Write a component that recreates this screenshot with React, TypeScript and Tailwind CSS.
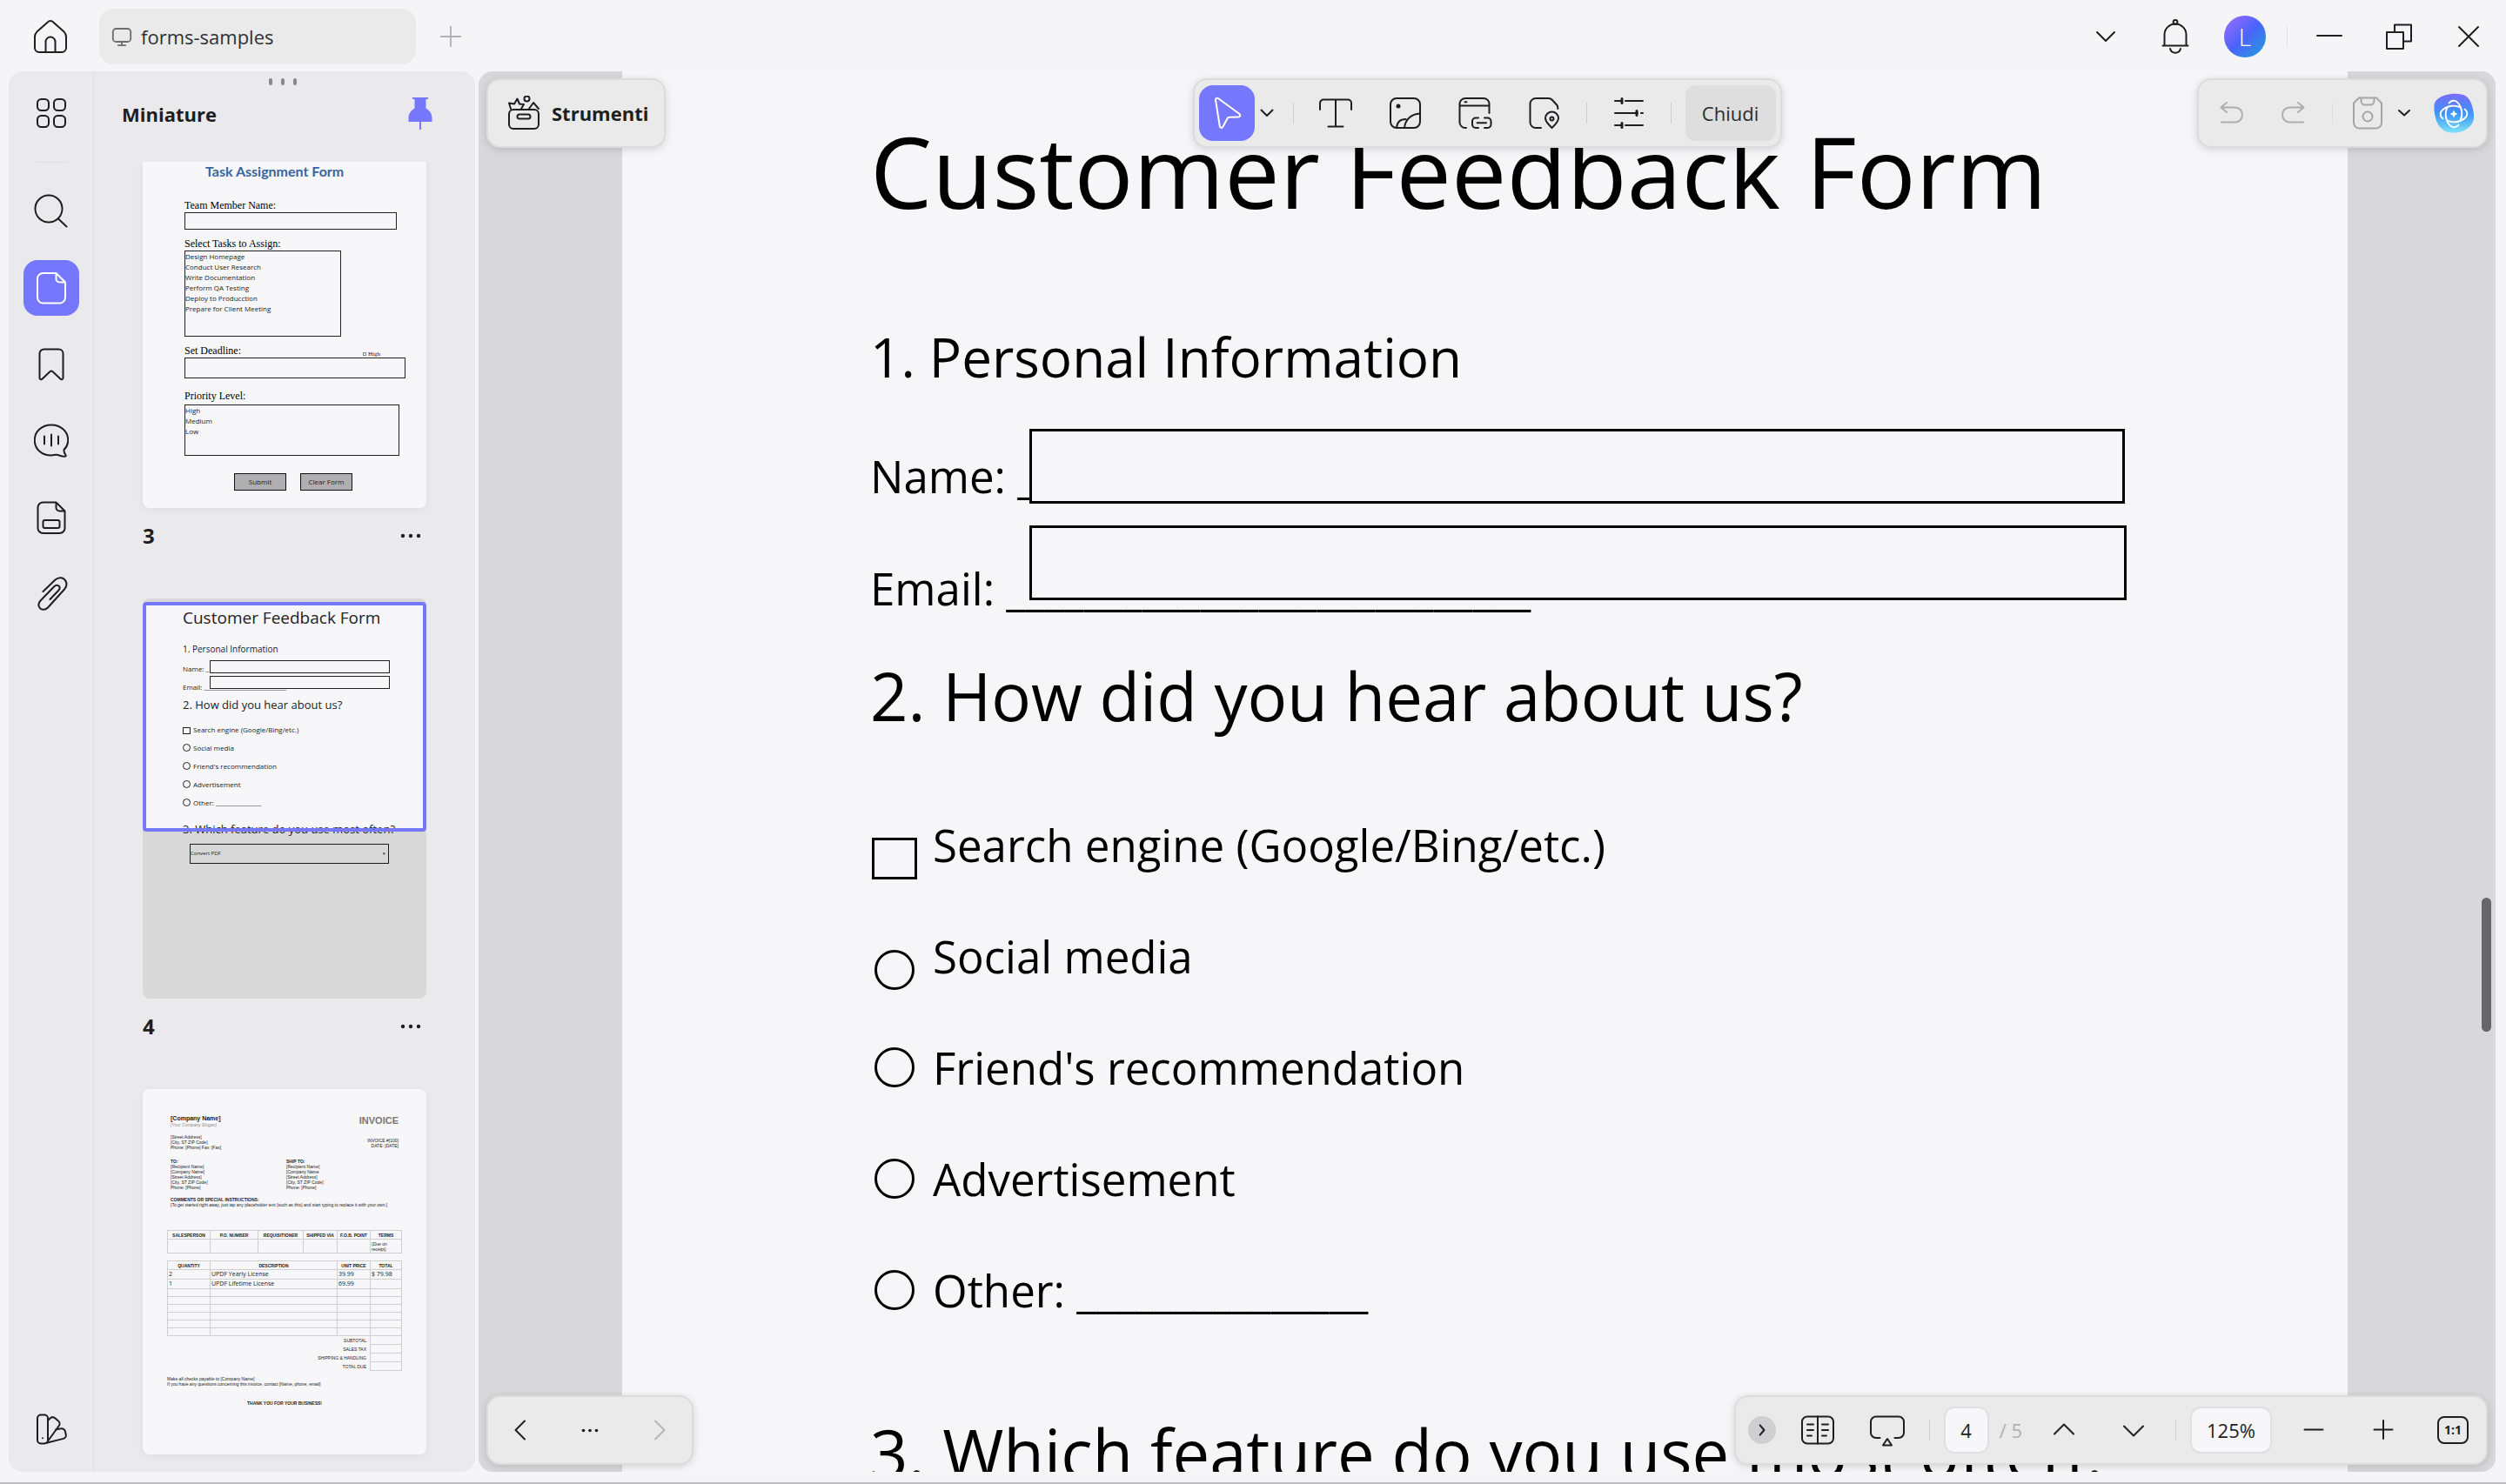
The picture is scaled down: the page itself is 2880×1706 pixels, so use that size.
import type { ReactNode } from "react";

interface IconProps {
  children: ReactNode;
  className?: string;
  stroke?: number;
}

function Icon({ children, className = "size-10", stroke = 2 }: IconProps) {
  return (
    <svg
      viewBox="0 0 40 40"
      fill="none"
      stroke="currentColor"
      strokeWidth={stroke}
      strokeLinecap="round"
      strokeLinejoin="round"
      className={`shrink-0 ${className}`}
      aria-hidden="true"
    >
      {children}
    </svg>
  );
}

interface ToolButtonProps {
  label: string;
  children: ReactNode;
  className?: string;
}

function ToolButton({ label, children, className = "w-16" }: ToolButtonProps) {
  return (
    <button
      type="button"
      aria-label={label}
      className={`flex h-16 shrink-0 items-center justify-center rounded-2xl ${className}`}
    >
      {children}
    </button>
  );
}

function Separator({ className = "bg-[#cfcfd0]" }: { className?: string }) {
  return <div className={`h-6 w-px shrink-0 ${className}`} />;
}

const barClass =
  "pointer-events-auto flex h-20 items-center rounded-2xl border-2 border-[#dcdcdd] bg-[#eaeaeb] shadow-[0_2px_10px_rgba(0,0,0,0.14)]";

function Dots({ className = "w-6" }: { className?: string }) {
  return (
    <svg viewBox="0 0 24 6" fill="currentColor" className={className} aria-hidden="true">
      <circle cx="3" cy="3" r="2.2" />
      <circle cx="12" cy="3" r="2.2" />
      <circle cx="21" cy="3" r="2.2" />
    </svg>
  );
}

function TitleBar() {
  return (
    <header className="flex h-[82px] shrink-0 items-center justify-between pt-[2px] pr-[11px] pl-[26px]">
      <div className="flex items-center">
        <ToolButton label="Home">
          <Icon>
            <path d="M16.8 3.4a4.4 4.4 0 0 1 6.4 0L35.6 14.6A8 8 0 0 1 38 20v13a5 5 0 0 1-5 5H7a5 5 0 0 1-5-5V20a8 8 0 0 1 2.4-5.4z" />
            <path d="M14.5 38V26a5.5 5.5 0 0 1 11 0v12" />
          </Icon>
        </ToolButton>
        <div className="ml-6 flex h-16 w-[364px] items-center gap-[10px] rounded-2xl bg-[#eaeaeb] px-[14px] text-[22px] text-[#303032]">
          <Icon className="size-6 text-[#6d6d70]" stroke={3}>
            <rect x="3" y="5" width="34" height="25" rx="6" />
            <path d="M20 30v6M13 37h14" />
          </Icon>
          forms-samples
        </div>
        <ToolButton label="New tab" className="ml-2 w-16">
          <Icon className="size-6 text-[#b0b0b2]" stroke={3}>
            <path d="M20 1v38M1 20h38" />
          </Icon>
        </ToolButton>
      </div>
      <div className="flex items-center gap-4">
        <ToolButton label="More tabs">
          <Icon>
            <path d="M10 15l10 10 10-10" />
          </Icon>
        </ToolButton>
        <ToolButton label="Notifications">
          <Icon>
            <circle cx="20" cy="3.5" r="2.4" />
            <path d="M7.5 30V18a12.5 12.5 0 0 1 25 0v12M5.5 30.5h29M14 34a6.2 6.2 0 0 0 12 0" />
          </Icon>
        </ToolButton>
        <ToolButton label="Account">
          <span className="flex size-12 items-center justify-center rounded-full bg-linear-to-br from-[#9a6bfa] via-[#4a63fb] to-[#0a9bd8] text-[28px] font-light text-white">
            L
          </span>
        </ToolButton>
        <Separator className="bg-[#e3e3e5]" />
        <ToolButton label="Minimize">
          <Icon>
            <path d="M6 19h28" />
          </Icon>
        </ToolButton>
        <ToolButton label="Restore">
          <Icon>
            <path d="M6 15h19v19H6zM15 15V6.5h19v19h-9" />
          </Icon>
        </ToolButton>
        <ToolButton label="Close">
          <Icon>
            <path d="M9 9l22 22M31 9L9 31" />
          </Icon>
        </ToolButton>
      </div>
    </header>
  );
}

function Rail() {
  return (
    <nav className="flex w-[98px] shrink-0 flex-col items-center gap-6 border-r border-[#dfdfe1] pt-4 pb-[17px]">
      <ToolButton label="Apps">
        <Icon>
          <rect x="4" y="4" width="13" height="13" rx="4.5" />
          <rect x="23" y="4" width="13" height="13" rx="4.5" />
          <rect x="4" y="23" width="13" height="13" rx="4.5" />
          <rect x="23" y="23" width="13" height="13" rx="4.5" />
        </Icon>
      </ToolButton>
      <div className="h-px w-9 bg-[#dddddf]" />
      <ToolButton label="Search">
        <Icon>
          <circle cx="17" cy="17" r="15.5" />
          <path d="M28 28.5l9.5 9" />
        </Icon>
      </ToolButton>
      <ToolButton label="Thumbnails" className="w-16 bg-[#7578fd] text-white">
        <Icon>
          <path d="M10 3h15.5L36 13.5V31a6.500 6.500 0 0 1-6.500 6.500h-19A6.500 6.500 0 0 1 4 31V9.500A6.500 6.500 0 0 1 10.500 3M25.500 3v6.500a4 4 0 0 0 4 4H36" />
        </Icon>
      </ToolButton>
      <ToolButton label="Bookmarks">
        <Icon>
          <path d="M6.500 7.500a5 5 0 0 1 5-5h17a5 5 0 0 1 5 5v28c0 1.600-1.700 2.300-2.900 1.200l-8.700-8.200a2.700 2.700 0 0 0-3.800 0l-8.700 8.200c-1.200 1.100-2.900.4-2.900-1.200z" />
        </Icon>
      </ToolButton>
      <ToolButton label="Comments">
        <Icon>
          <path d="M29 36.500c-3-1.500-5-.3-9 0C8.500 36.500.8 29 .8 19S9 1.500 20 1.500 39.200 9 39.200 19c0 4.500-1.500 8-4.700 11-.3 2 .8 4.500 2.300 7-.6 1.300-4.600.6-7.800-.5z" />
          <path d="M12 14.500v9M20 12.500v13M28 14.500v9" />
        </Icon>
      </ToolButton>
      <ToolButton label="Fields">
        <Icon>
          <path d="M10.500 2.500h15L35.500 12.500V32a6 6 0 0 1-6 6h-19a6 6 0 0 1-6-6V8.500a6 6 0 0 1 6-6zM25.500 2.500v6a4 4 0 0 0 4 4h6" />
          <rect x="10.500" y="23" width="19" height="9" rx="2" />
        </Icon>
      </ToolButton>
      <ToolButton label="Attachments">
        <Icon>
          <path d="M10.500 17L24.500 3.500c4.500-4 10-2.500 12 1.500 1.800 3.600.8 7-1.500 9.500L16 35.500c-3.500 3.500-7.500 2.500-9.300.3-2-2.500-1.700-5.500.8-8.300L23.500 11c2-2 4.300-1.500 5.400-.2 1.200 1.500.9 3.300-.6 4.900L18.500 26" />
        </Icon>
      </ToolButton>
      <div className="mt-auto">
        <ToolButton label="Themes">
          <Icon>
            <rect x="4" y="3.5" width="12" height="33" rx="4" />
            <path d="M16 10l2.500-2.500a4.500 4.500 0 0 1 6 0l3.500 3a4 4 0 0 1 .8 5.500L16.500 33M25 20.500l6-1.200a4 4 0 0 1 4.800 3l1 4a4 4 0 0 1-3 4.600L13.500 36" />
            <path d="M10 30.200v.1" />
          </Icon>
        </ToolButton>
      </div>
    </nav>
  );
}

const tasks = [
  "Design Homepage",
  "Conduct User Research",
  "Write Documentation",
  "Perform QA Testing",
  "Deploy to Producction",
  "Prepare for Client Meeting",
];

const fieldTitle = "font-['Liberation_Serif',serif] text-[12px] leading-4 text-black";

function TaskPreview() {
  return (
    <div className="flex h-[398px] flex-col rounded-b-lg bg-[#f7f6f8] pl-12 text-[8px] leading-3 text-[#222] shadow-[0_2px_8px_rgba(0,0,0,0.05)]">
      <p className="pl-6 font-['Lato',sans-serif] text-[16px] leading-[22px] font-bold text-[#37659f]">
        Task Assignment Form
      </p>
      <p className={`mt-5 ${fieldTitle}`}>Team Member Name:</p>
      <div className="h-5 w-[244px] border border-[#222]" />
      <p className={`mt-2 ${fieldTitle}`}>Select Tasks to Assign:</p>
      <ul className="h-[99px] w-[180px] border border-[#222]">
        {tasks.map((task) => (
          <li key={task}>{task}</li>
        ))}
      </ul>
      <div className="mt-2 flex items-end justify-between pr-[53px]">
        <span className={fieldTitle}>Set Deadline:</span>
        <span className="flex items-center gap-[2px] font-['Liberation_Serif',serif] text-[7px] leading-[8px]">
          <span className="size-1 border border-[#888]" />
          High
        </span>
      </div>
      <div className="h-6 w-[254px] border border-[#222]" />
      <p className={`mt-3 ${fieldTitle}`}>Priority Level:</p>
      <ul className="mt-[2px] h-[59px] w-[247px] border border-[#222]">
        <li>High</li>
        <li>Medium</li>
        <li>Low</li>
      </ul>
      <div className="mt-5 flex gap-4 pl-[57px] text-center leading-[18px]">
        <span className="h-5 w-[60px] border border-[#111] bg-[#afaeb0]">Submit</span>
        <span className="h-5 w-[60px] border border-[#111] bg-[#afaeb0]">Clear Form</span>
      </div>
    </div>
  );
}

const options = ["Search engine (Google/Bing/etc.)", "Social media", "Friend's recommendation", "Advertisement"];

function FeedbackPreview() {
  return (
    <div className="relative h-[460px] overflow-hidden rounded-lg bg-[#f7f6f8] pt-[10px] pl-[46px] text-[8px] text-[#222]">
      <p className="text-[19px] leading-6">Customer Feedback Form</p>
      <p className="mt-4 text-[10px] leading-4">1. Personal Information</p>
      <div className="mt-[5px] flex h-[15px] items-end">
        <span className="w-[31px] leading-[10px]">Name: _</span>
        <span className="h-[15px] w-[207px] border border-[#222]" />
      </div>
      <div className="mt-[3px] flex h-[18px]">
        <span className="w-[31px] self-end leading-[10px] whitespace-nowrap">Email: ___________________________</span>
        <span className="h-[15px] w-[207px] border border-[#222]" />
      </div>
      <p className="mt-[5px] text-[13px] leading-5">2. How did you hear about us?</p>
      <ul className="mt-2">
        {options.map((option, index) => (
          <li key={option} className="flex h-[21px] items-center gap-[3px]">
            <span
              className={
                index === 0 ? "mt-[3px] h-2 w-[9px] border border-[#222]" : "size-[9px] rounded-full border border-[#222]"
              }
            />
            {option}
          </li>
        ))}
        <li className="flex h-[21px] items-center gap-[3px]">
          <span className="size-[9px] rounded-full border border-[#222]" />
          Other: _______________
        </li>
      </ul>
      <p className="mt-[10px] text-[13px] leading-5">3. Which feature do you use most often?</p>
      <div className="mt-[7px] ml-2 flex h-[23px] w-[229px] items-center justify-between border border-[#222] pr-[3px] text-[6px]">
        Convert PDF
        <span className="text-[5px]">▾</span>
      </div>
      {/* Visible part of the page, everything outside it is dimmed */}
      <div className="absolute inset-x-0 top-1 h-[264px] rounded-sm border-4 border-[#7578fd] shadow-[0_0_0_500px_rgba(0,0,0,0.12)]" />
    </div>
  );
}

const cell = "border border-[#cfced1] px-px";

function InvoicePreview() {
  return (
    <div className="h-[420px] rounded-lg bg-[#f7f6f8] px-7 pt-[30px] font-['Liberation_Sans',Arial,sans-serif] text-[5px] leading-[6px] text-[#222] shadow-[0_2px_8px_rgba(0,0,0,0.05)]">
      <div className="flex justify-between px-1">
        <div>
          <p className="text-[7px] leading-[8px] font-bold">[Company Name]</p>
          <p className="text-[#888] italic">[Your Company Slogan]</p>
          <p className="mt-2">[Street Address]</p>
          <p>[City, ST ZIP Code]</p>
          <p>Phone: [Phone] Fax: [Fax]</p>
        </div>
        <div className="text-right">
          <p className="text-[11px] leading-3 font-bold text-[#777]">INVOICE</p>
          <p className="mt-[14px]">INVOICE #[100]</p>
          <p>DATE: [DATE]</p>
        </div>
      </div>
      <div className="mt-[10px] grid grid-cols-2 pl-1">
        <div>
          <p className="font-bold">TO:</p>
          <p>[Recipient Name]</p>
          <p>[Company Name]</p>
          <p>[Street Address]</p>
          <p>[City, ST ZIP Code]</p>
          <p>Phone: [Phone]</p>
        </div>
        <div>
          <p className="font-bold">SHIP TO:</p>
          <p>[Recipient Name]</p>
          <p>[Company Name</p>
          <p>[Street Address]</p>
          <p>[City, ST ZIP Code]</p>
          <p>Phone: [Phone]</p>
        </div>
      </div>
      <p className="mt-2 pl-1 font-bold">COMMENTS OR SPECIAL INSTRUCTIONS:</p>
      <p className="pl-1 whitespace-nowrap">
        [To get started right away, just tap any placeholder text (such as this) and start typing to replace it with your own.]
      </p>
      <table className="mt-[26px] w-full table-fixed">
        <thead>
          <tr className="h-[10px] whitespace-nowrap">
            <th className={`w-[49px] ${cell}`}>SALESPERSON</th>
            <th className={`w-[55px] ${cell}`}>P.O. NUMBER</th>
            <th className={`w-[52px] ${cell}`}>REQUISITIONER</th>
            <th className={`w-[39px] ${cell}`}>SHIPPED VIA</th>
            <th className={`w-[38px] ${cell}`}>F.O.B. POINT</th>
            <th className={cell}>TERMS</th>
          </tr>
        </thead>
        <tbody>
          <tr className="h-4">
            <td className={cell} />
            <td className={cell} />
            <td className={cell} />
            <td className={cell} />
            <td className={cell} />
            <td className={cell}>
              (Due on
              <br />
              receipt)
            </td>
          </tr>
        </tbody>
      </table>
      <table className="mt-2 w-full table-fixed">
        <thead>
          <tr className="h-[10px]">
            <th className={`w-[49px] ${cell}`}>QUANTITY</th>
            <th className={`w-[146px] ${cell}`}>DESCRIPTION</th>
            <th className={`w-[38px] whitespace-nowrap ${cell}`}>UNIT PRICE</th>
            <th className={cell}>TOTAL</th>
          </tr>
        </thead>
        <tbody className="font-['Open_Sans',sans-serif] text-[7px] leading-[8px]">
          <tr className="h-[11px]">
            <td className={cell}>2</td>
            <td className={cell}>UPDF Yearly License</td>
            <td className={cell}>39.99</td>
            <td className={cell}>$ 79.98</td>
          </tr>
          <tr className="h-[11px]">
            <td className={cell}>1</td>
            <td className={cell}>UPDF Lifetime License</td>
            <td className={cell}>69.99</td>
            <td className={cell} />
          </tr>
          {[1, 2, 3, 4, 5, 6].map((row) => (
            <tr key={row} className="h-[9px]">
              <td className={cell} />
              <td className={cell} />
              <td className={cell} />
              <td className={cell} />
            </tr>
          ))}
        </tbody>
        <tfoot className="text-right">
          {["SUBTOTAL", "SALES TAX", "SHIPPING & HANDLING", "TOTAL DUE"].map((label) => (
            <tr key={label} className="h-[10px]">
              <td colSpan={3} className="pr-1">
                {label}
              </td>
              <td className={cell} />
            </tr>
          ))}
        </tfoot>
      </table>
      <p className="mt-[6px]">Make all checks payable to [Company Name]</p>
      <p>If you have any questions concerning this invoice, contact [Name, phone, email]</p>
      <p className="mt-4 text-center font-bold">THANK YOU FOR YOUR BUSINESS!</p>
    </div>
  );
}

function ThumbnailFooter({ page }: { page: number }) {
  return (
    <div className="mb-10 flex h-16 items-center justify-between pr-[6px] text-[24px] leading-8 font-bold">
      {page}
      <button type="button" aria-label={`Page ${page} options`}>
        <Dots />
      </button>
    </div>
  );
}

function Thumbnails() {
  return (
    <section className="flex min-w-0 flex-1 flex-col">
      <div className="flex h-5 items-end justify-center gap-[10px] pr-1 pb-1">
        <span className="h-2 w-1 rounded-full bg-[#8a8a8c]" />
        <span className="h-2 w-1 rounded-full bg-[#8a8a8c]" />
        <span className="h-2 w-1 rounded-full bg-[#8a8a8c]" />
      </div>
      <div className="flex h-[84px] items-start justify-between pr-[43px] pl-8">
        <h2 className="pt-[13px] text-[22px] leading-8 font-bold">Miniature</h2>
        <button type="button" aria-label="Pin panel" className="mt-[9px] text-[#7578fd]">
          <Icon>
            <path
              d="M11 1h18v2h-2.500v10.500c4.500 2.500 7 6.500 7 11V29h-27v-4.500c0-4.500 2.500-8.500 7-11V3H11z"
              fill="currentColor"
              stroke="none"
            />
            <path d="M20 29v9" strokeLinecap="butt" />
          </Icon>
        </button>
      </div>
      <div className="min-h-0 flex-1 overflow-hidden px-14">
        <TaskPreview />
        <ThumbnailFooter page={3} />
        <FeedbackPreview />
        <ThumbnailFooter page={4} />
        <InvoicePreview />
      </div>
    </section>
  );
}

interface FormOption {
  id: string;
  label: string;
  type: "checkbox" | "radio";
  shape: string;
}

const formOptions: FormOption[] = [
  { id: "search", label: "Search engine (Google/Bing/etc.)", type: "checkbox", shape: "mt-8 h-12 w-[52px]" },
  { id: "social", label: "Social media", type: "radio", shape: "mt-8 mx-[3px] size-[46px] rounded-full" },
  { id: "friend", label: "Friend's recommendation", type: "radio", shape: "mx-[3px] size-[46px] rounded-full" },
  { id: "ad", label: "Advertisement", type: "radio", shape: "mx-[3px] size-[46px] rounded-full" },
  { id: "other", label: "Other: _______________", type: "radio", shape: "mx-[3px] size-[46px] rounded-full" },
];

function DocumentPage() {
  return (
    <form className="h-full overflow-hidden bg-[#f6f5f8] pt-[34px] pl-[285px] text-[51px] leading-[64px] whitespace-nowrap text-black">
      <h1 className="text-[113px] leading-[160px]">Customer Feedback Form</h1>
      <h2 className="mt-[94px] text-[62px] leading-[80px]">1. Personal Information</h2>
      <div className="mt-[43px] flex h-[86px] items-end pr-[256px]">
        <label htmlFor="name" className="w-[183px] shrink-0">
          Name: _
        </label>
        <input id="name" className="h-[86px] min-w-0 flex-1 border-[3px] border-black bg-[#f6f5f8] px-4" />
      </div>
      <div className="mt-[25px] flex h-[104px] items-start pr-[254px]">
        <label htmlFor="email" className="w-[183px] shrink-0 self-end">
          Email: ___________________________
        </label>
        <input id="email" className="h-[86px] min-w-0 flex-1 border-[3px] border-black bg-[#f6f5f8] px-4" />
      </div>
      <h2 className="mt-[44px] text-[76px] leading-[96px]">2. How did you hear about us?</h2>
      <div className="mt-[59px]">
        {formOptions.map((option) => (
          <div key={option.id} className="flex h-32 items-center pl-[2px]">
            <input
              id={option.id}
              name="source"
              type={option.type}
              className={`shrink-0 appearance-none border-[3px] border-black checked:bg-black ${option.shape}`}
            />
            <label htmlFor={option.id} className="ml-[18px]">
              {option.label}
            </label>
          </div>
        ))}
      </div>
      <h2 className="mt-[75px] text-[76px] leading-[96px]">3. Which feature do you use most often?</h2>
    </form>
  );
}

function EditToolbar() {
  return (
    <div className={`${barClass} gap-4 px-[5px]`}>
      <div className="flex items-center">
        <ToolButton label="Select" className="w-16 bg-[#7578fd] text-white">
          <Icon>
            <path d="M8.500 6c-.2-2.200 1.600-3 3.200-1.700l24 17.500c2 1.600 1.200 3.600-1.200 3.700l-10 .3c-1.200 0-2 .5-2.600 1.600l-5 9.300c-1 1.800-3.300 1.500-3.600-.8z" transform="translate(-1.500 -1)" />
          </Icon>
        </ToolButton>
        <button type="button" aria-label="Selection modes" className="flex h-16 w-7 items-center justify-center">
          <Icon className="size-5" stroke={4}>
            <path d="M7 13l13 13 13-13" />
          </Icon>
        </button>
      </div>
      <Separator />
      <ToolButton label="Text">
        <Icon>
          <path d="M2 16V8.500a4 4 0 0 1 4-4h28a4 4 0 0 1 4 4V16M20 4.500v31M11.500 35.500h17" />
        </Icon>
      </ToolButton>
      <ToolButton label="Image">
        <Icon>
          <rect x="3" y="3" width="34" height="34" rx="7" />
          <circle cx="12" cy="12" r="1.5" fill="currentColor" />
          <path d="M10 37c.5-6 4-10 10.500-10M19 37c1-10 8-16 18-16.500" />
        </Icon>
      </ToolButton>
      <ToolButton label="Link">
        <Icon>
          <path d="M10 37H9a6.500 6.500 0 0 1-6.500-6.500v-21A6.500 6.500 0 0 1 9 3h21a6.500 6.500 0 0 1 6.500 6.500V20M2.500 11.500h34M8.500 7.300h2" />
          <path d="M24 25.500h-3a4 4 0 0 0-4 4V33a4 4 0 0 0 4 4h3M31 25.500h3.500a4 4 0 0 1 4 4V33a4 4 0 0 1-4 4H31M22.500 31.200h10.500" />
        </Icon>
      </ToolButton>
      <ToolButton label="Page mark">
        <Icon>
          <path d="M16 37h-6a6.500 6.500 0 0 1-6.500-6.500v-21A6.500 6.500 0 0 1 10 3h14.500a6 6 0 0 1 4.500 2l5 5.500a5 5 0 0 1 1.300 3.500v1" />
          <path d="M28.500 37c-4.500-4.200-7.500-7.200-7.500-11a7.500 7.500 0 0 1 15 0c0 3.800-3 6.800-7.500 11z" />
          <circle cx="28.5" cy="26.5" r="2" />
        </Icon>
      </ToolButton>
      <Separator />
      <ToolButton label="Properties">
        <Icon>
          <path d="M4 6h8M16 6h20M4 20h26M34 20h2M4 34h8M16 34h20" />
          <path d="M12 3.500v5M29 17.500v5M12 31.500v5" strokeWidth="3" />
        </Icon>
      </ToolButton>
      <Separator />
      <button type="button" className="h-16 w-[104px] rounded-xl bg-[#dededf] text-[22px] text-[#2c2c2e]">
        Chiudi
      </button>
    </div>
  );
}

function HistoryToolbar() {
  return (
    <div className={`${barClass} gap-4 justify-self-end pr-[14px] pl-[9px]`}>
      <ToolButton label="Undo" className="w-14 text-[#adadb0]">
        <Icon>
          <path d="M15 8l-6.500 5.500L15 19M9 13.500h15.500a8.500 8.500 0 0 1 0 17H9" />
        </Icon>
      </ToolButton>
      <ToolButton label="Redo" className="w-14 text-[#adadb0]">
        <Icon>
          <path d="M25 8l6.500 5.500L25 19M31 13.500H15.500a8.500 8.500 0 0 0 0 17H31" />
        </Icon>
      </ToolButton>
      <Separator className="bg-[#dddddf]" />
      <div className="flex items-center">
        <ToolButton label="Save" className="w-12 text-[#a5a5a8]">
          <Icon>
            <path d="M10 2.500h20l6 6V31a6.500 6.500 0 0 1-6.500 6.500h-19A6.500 6.500 0 0 1 4 31V8.500z" />
            <path d="M12.500 2.500V6a4.500 4.500 0 0 0 4.500 4.500h6A4.500 4.500 0 0 0 27.500 6V2.500" />
            <circle cx="20" cy="24" r="5.5" />
          </Icon>
        </ToolButton>
        <button type="button" aria-label="Save options" className="flex h-16 w-9 items-center justify-center">
          <Icon className="size-5" stroke={4}>
            <path d="M8 14l12 11 12-11" />
          </Icon>
        </button>
      </div>
      <button type="button" aria-label="AI assistant">
        <svg viewBox="0 0 46 46" fill="none" className="size-[46px]" aria-hidden="true">
          <defs>
            <linearGradient id="ai" x1="0" y1="0" x2="0" y2="1">
              <stop offset="0" stopColor="#7a6bfb" />
              <stop offset="0.5" stopColor="#3d93fb" />
              <stop offset="1" stopColor="#7fe3f6" />
            </linearGradient>
          </defs>
          <path
            d="M7 5C14 0 31-1 37 3.500 43 8 45 16 46 25c1 8-4 15-11 18-8 3.500-18 4-24-.5C4 38 1 28 .5 19 0 12 1 9 7 5z"
            fill="url(#ai)"
          />
          <g stroke="#fff" strokeWidth="1.9" strokeLinecap="round">
            <path d="M17.500 11.500c2-3 7-4.500 10.500 0 5 6 5.500 14 2.500 20" />
            <path d="M17.500 11.500c2-3 7-4.500 10.500 0 5 6 5.500 14 2.500 20" transform="rotate(90 23 24)" />
            <path d="M17.500 11.500c2-3 7-4.500 10.500 0 5 6 5.500 14 2.500 20" transform="rotate(180 23 24)" />
            <path d="M17.500 11.500c2-3 7-4.500 10.500 0 5 6 5.500 14 2.500 20" transform="rotate(270 23 24)" />
          </g>
          <path d="M23 19.500l1.400 3.100 3.100 1.400-3.100 1.400L23 28.500l-1.400-3.100-3.100-1.400 3.100-1.400z" fill="#fff" />
        </svg>
      </button>
    </div>
  );
}

function ViewToolbar() {
  return (
    <div className={`${barClass} gap-4 pr-[6px] pl-[14px]`}>
      <button
        type="button"
        aria-label="Collapse toolbar"
        className="flex size-8 shrink-0 items-center justify-center rounded-full bg-[#cfced0]"
      >
        <Icon className="size-4" stroke={5}>
          <path d="M14 6l12 14-12 14" />
        </Icon>
      </button>
      <ToolButton label="Page layout">
        <Icon>
          <rect x="2" y="4.5" width="36" height="31" rx="6" />
          <path d="M20 4.500v31M8 13.500h7M8 20h7M8 26.500h5M25 13.500h7M25 20h7M25 26.500h5" />
        </Icon>
      </ToolButton>
      <ToolButton label="Slideshow">
        <Icon>
          <path d="M11.500 29H7a6 6 0 0 1-6-6V10.500a6 6 0 0 1 6-6h26a6 6 0 0 1 6 6V23a6 6 0 0 1-6 6h-4.500M20 30l-5 7.500h10z" />
        </Icon>
      </ToolButton>
      <Separator />
      <div className="flex items-center gap-3 text-[22px]">
        <input
          aria-label="Page number"
          defaultValue="4"
          className="h-[54px] w-[52px] rounded-xl border-2 border-[#e0dfe1] bg-[#f7f6f8] text-center"
        />
        <span className="text-[#b0b0b3]">/ 5</span>
      </div>
      <ToolButton label="Previous page">
        <Icon>
          <path d="M9 24.500l11-11 11 11" />
        </Icon>
      </ToolButton>
      <ToolButton label="Next page">
        <Icon>
          <path d="M9 15.500l11 11 11-11" />
        </Icon>
      </ToolButton>
      <Separator />
      <input
        aria-label="Zoom"
        defaultValue="125%"
        className="h-[54px] w-[94px] rounded-xl border-2 border-[#e0dfe1] bg-[#f7f6f8] text-center text-[22px]"
      />
      <ToolButton label="Zoom out">
        <Icon>
          <path d="M9.500 19.500h21" />
        </Icon>
      </ToolButton>
      <ToolButton label="Zoom in">
        <Icon>
          <path d="M9.500 19.500h21M20 9v21" />
        </Icon>
      </ToolButton>
      <ToolButton label="Actual size">
        <span className="flex h-8 w-9 items-center justify-center rounded-lg border-2 border-current text-[14px] leading-4 font-bold">
          1:1
        </span>
      </ToolButton>
    </div>
  );
}

function Viewer() {
  return (
    <main className="relative min-w-0 flex-1 overflow-hidden rounded-2xl bg-[#d8d7d9] pr-[170px] pl-[165px]">
      <DocumentPage />
      <div className="pointer-events-none absolute inset-x-[9px] top-2 grid grid-cols-[1fr_auto_1fr]">
        <div className={`${barClass} justify-self-start pr-[18px] pl-[21px]`}>
          <button type="button" className="flex items-center gap-3 text-[22px] font-bold">
            <Icon>
              <rect x="3" y="16" width="34" height="22" rx="5" />
              <rect x="12.500" y="21.500" width="15" height="5" rx="2.500" />
              <path d="M5 15L3 8.500l6 1 3.500-6 2.500 6 5 .5-3 5M26 15l5-7 6 7" />
              <circle cx="23.500" cy="3.500" r="3" />
            </Icon>
            Strumenti
          </button>
        </div>
        <EditToolbar />
        <HistoryToolbar />
      </div>
      <div className="pointer-events-none absolute inset-x-[9px] bottom-2 flex justify-between">
        <div className={`${barClass} gap-4 px-[5px]`}>
          <ToolButton label="Back">
            <Icon>
              <path d="M25 9.500L14.500 20 25 30.500" />
            </Icon>
          </ToolButton>
          <ToolButton label="History">
            <Dots className="w-5" />
          </ToolButton>
          <ToolButton label="Forward" className="w-16 text-[#b5b5b8]">
            <Icon>
              <path d="M15 9.500L25.500 20 15 30.500" />
            </Icon>
          </ToolButton>
        </div>
        <ViewToolbar />
      </div>
      <div className="absolute top-[59%] right-[5px] h-[154px] w-[11px] rounded-full bg-[#666668]" />
    </main>
  );
}

export default function App() {
  return (
    <div className="flex h-screen flex-col overflow-hidden border-b-2 border-[#bdbdbf] bg-[#f5f5f7] font-['Open_Sans','Noto_Sans',sans-serif] text-[#1e1e20]">
      <TitleBar />
      <div className="flex min-h-0 flex-1 gap-1 pr-3 pb-3 pl-[10px]">
        <aside className="flex w-[536px] shrink-0 overflow-hidden rounded-2xl bg-[#eae9eb]">
          <Rail />
          <Thumbnails />
        </aside>
        <Viewer />
      </div>
    </div>
  );
}
